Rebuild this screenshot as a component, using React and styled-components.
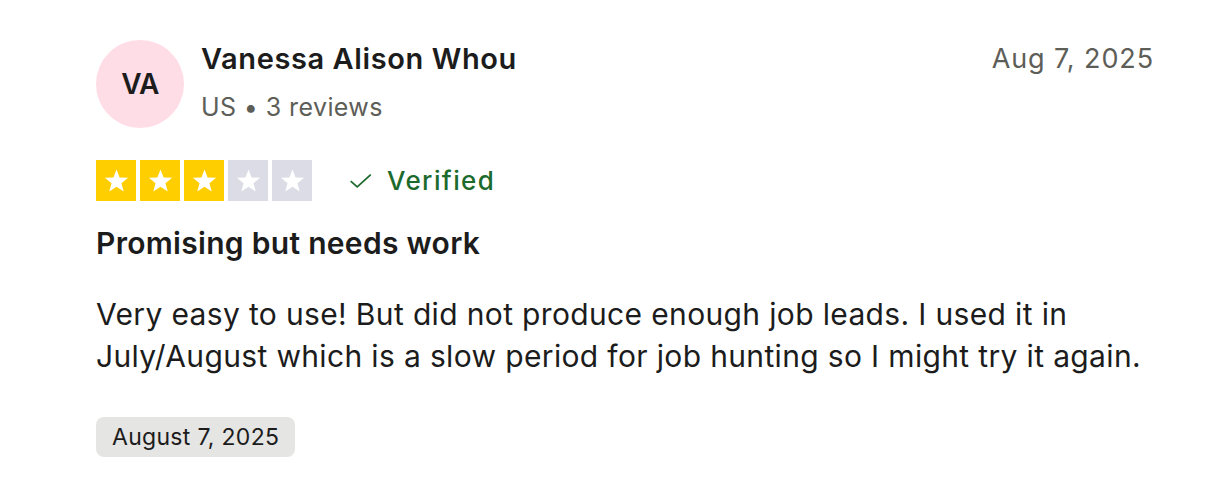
import React from 'react';
import styled, { createGlobalStyle } from 'styled-components';

const GlobalStyle = createGlobalStyle`
    body {
        margin: 0;
        background: #ffffff;
        font-family: Inter, "Noto Sans", sans-serif;
        color: #1c1c1c;
    }
`

const Star = ({ filled }) => (
    <StarBox filled={filled}>
        <svg width="27" height="27" viewBox="0 0 24 24">
            <path d="M12 2.2l2.75 7.1 7.55.35-5.9 4.75 2.02 7.3L12 17.55 5.58 21.7l2.02-7.3-5.9-4.75 7.55-.35z" fill="#ffffff" />
        </svg>
    </StarBox>
)

const App = () => {
    const rating = 3;

    return (
        <>
            <GlobalStyle />
            <Card>
                <Header>
                    <Avatar>VA</Avatar>
                    <Who>
                        <Name>Vanessa Alison Whou</Name>
                        <Meta>US • 3 reviews</Meta>
                    </Who>
                    <DateText>Aug 7, 2025</DateText>
                </Header>
                <RatingRow>
                    <Stars>
                        {[1, 2, 3, 4, 5].map(n => <Star key={n} filled={n <= rating} />)}
                    </Stars>
                    <Verified>
                        <svg width="26" height="26" viewBox="0 0 24 24" fill="none">
                            <path d="M3 12.5l5.5 5L20.5 6.5" stroke="#1c6b2d" strokeWidth="1.6" strokeLinecap="round" strokeLinejoin="round" />
                        </svg>
                        Verified
                    </Verified>
                </RatingRow>
                <Title>Promising but needs work</Title>
                <Body>
                    Very easy to use! But did not produce enough job leads. I used it in July/August which is a slow period for job hunting so I might try it again.
                </Body>
                <Badge>August 7, 2025</Badge>
            </Card>
        </>
    )
}

const Card = styled.div`
    width: 1208px;
    height: 492px;
    box-sizing: border-box;
    padding: 40px 54px 0 96px;
    display: flex;
    flex-direction: column;
    align-items: flex-start;
`
const Header = styled.div`
    width: 100%;
    display: flex;
    align-items: flex-start;
`
const Avatar = styled.div`
    width: 88px;
    height: 88px;
    border-radius: 50%;
    background: #ffdde6;
    display: flex;
    align-items: center;
    justify-content: center;
    font-size: 28px;
    font-weight: 600;
    letter-spacing: -0.5px;
    color: #1c1c1c;
    flex-shrink: 0;
`
const Who = styled.div`
    display: flex;
    flex-direction: column;
    margin-left: 17px;
    flex: 1;
`
const Name = styled.div`
    font-size: 29px;
    font-weight: 600;
    line-height: 40px;
    margin-top: -1px;
    color: #1c1c1c;
    letter-spacing: 0.6px;
`
const Meta = styled.div`
    font-size: 25px;
    line-height: 34px;
    margin-top: 11px;
    color: #5e5e58;
    letter-spacing: 0.4px;
`
const DateText = styled.div`
    font-size: 27px;
    line-height: 40px;
    color: #5e5e58;
    margin-top: -1px;
    letter-spacing: 0.9px;
`
const RatingRow = styled.div`
    display: flex;
    align-items: center;
    margin-top: 32px;
`
const Stars = styled.div`
    display: flex;
    gap: 4px;
`
const StarBox = styled.div`
    width: 40px;
    height: 41px;
    background: ${p => p.filled ? '#ffce00' : '#dcdce6'};
    display: flex;
    align-items: center;
    justify-content: center;
`
const Verified = styled.div`
    display: flex;
    align-items: center;
    gap: 13px;
    margin-left: 36px;
    font-size: 26px;
    font-weight: 500;
    color: #1c6b2d;
    letter-spacing: 1.4px;
`
const Title = styled.h2`
    margin: 22px 0 0;
    font-size: 30px;
    font-weight: 600;
    line-height: 40px;
    color: #1c1c1c;
    letter-spacing: 0.3px;
`
const Body = styled.p`
    margin: 30px 0 0;
    font-size: 30px;
    line-height: 42px;
    color: #1c1c1c;
    max-width: 1060px;
    letter-spacing: 0.35px;
`
const Badge = styled.div`
    margin-top: 40px;
    background: #e5e5e3;
    border-radius: 8px;
    padding: 0 16px;
    height: 40px;
    display: flex;
    align-items: center;
    font-size: 23px;
    color: #1c1c1c;
    letter-spacing: 0.3px;
`

export default App;
